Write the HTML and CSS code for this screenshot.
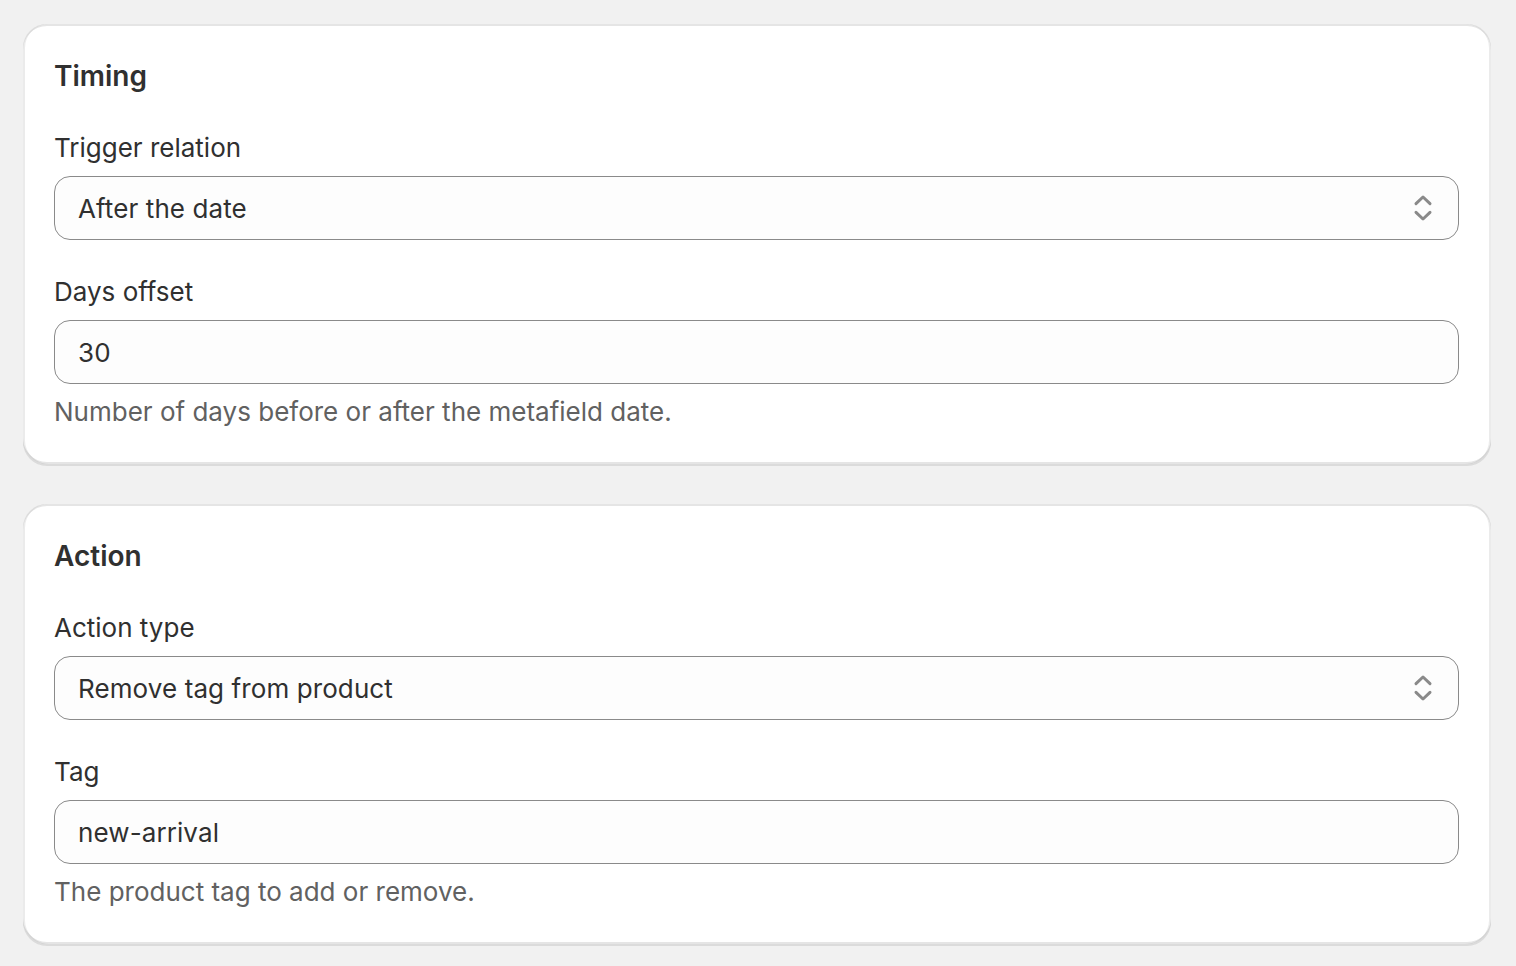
FILE: index.html
```html
<!DOCTYPE html>
<html lang="en">
<head>
  <meta charset="UTF-8">
  <meta name="viewport" content="width=device-width, initial-scale=1.0">
  <title>Automation settings</title>
  <link rel="stylesheet" href="styles.css">
</head>
<body>

  <div class="page">
    <!-- Timing card -->
    <section class="card">
      <h2 class="card-title">Timing</h2>

      <div class="field">
        <label class="field-label" for="triggerRelation">Trigger relation</label>
        <div class="select">
          <select id="triggerRelation">
            <option>Before the date</option>
            <option selected>After the date</option>
          </select>
          <svg class="select-icon" viewBox="0 0 20 20" aria-hidden="true">
            <path d="M6.5 7.8 10 4.5l3.5 3.3M6.5 12.2 10 15.5l3.5-3.3"/>
          </svg>
        </div>
      </div>

      <div class="field">
        <label class="field-label" for="daysOffset">Days offset</label>
        <input class="text-input" type="number" id="daysOffset" value="30">
        <p class="help-text">Number of days before or after the metafield date.</p>
      </div>
    </section>

    <!-- Action card -->
    <section class="card">
      <h2 class="card-title">Action</h2>

      <div class="field">
        <label class="field-label" for="actionType">Action type</label>
        <div class="select">
          <select id="actionType">
            <option>Add tag to product</option>
            <option selected>Remove tag from product</option>
          </select>
          <svg class="select-icon" viewBox="0 0 20 20" aria-hidden="true">
            <path d="M6.5 7.8 10 4.5l3.5 3.3M6.5 12.2 10 15.5l3.5-3.3"/>
          </svg>
        </div>
      </div>

      <div class="field">
        <label class="field-label" for="tag">Tag</label>
        <input class="text-input" type="text" id="tag" value="new-arrival">
        <p class="help-text">The product tag to add or remove.</p>
      </div>
    </section>
  </div>

</body>
</html>
```

FILE: styles.css
```css
body {
  margin: 0;
  background-color: #f1f1f1;
  font-family: Inter, "Noto Sans", sans-serif;
  color: #303030;
}
.page {
  padding: 24px 25px 24px 23px;
  display: flex;
  flex-direction: column;
  gap: 40px;
}
.card {
  background-color: #fff;
  border-radius: 24px;
  padding: 32px 32px 32px 31px;
  display: flex;
  flex-direction: column;
  gap: 32px;
  box-shadow: 0 2px 0 0 rgba(26, 26, 26, 0.1),
              inset 0 2px 0 0 rgba(204, 204, 204, 0.5),
              inset 2px 0 0 0 rgba(0, 0, 0, 0.08),
              inset -2px 0 0 0 rgba(0, 0, 0, 0.08),
              inset 0 -2px 0 0 rgba(0, 0, 0, 0.1);
}
.card-title {
  margin: 0;
  font-size: 28px;
  line-height: 40px;
  font-weight: 600;
}
.field {
  display: flex;
  flex-direction: column;
}
.field-label {
  font-size: 26px;
  line-height: 40px;
  font-weight: 400;
  margin-bottom: 8px;
}
.select {
  position: relative;
}
.select select,
.text-input {
  box-sizing: border-box;
  width: 100%;
  height: 64px;
  margin: 0;
  padding: 0 23px;
  border: 1.5px solid #8a8a8a;
  border-radius: 16px;
  background-color: #fdfdfd;
  font-family: inherit;
  font-size: 26px;
  font-weight: 400;
  letter-spacing: 0.1px;
  color: #303030;
  appearance: none;
  -moz-appearance: textfield;
  outline: none;
}
.text-input::-webkit-inner-spin-button,
.text-input::-webkit-outer-spin-button {
  -webkit-appearance: none;
  margin: 0;
}
.select-icon {
  position: absolute;
  right: 16px;
  top: 12px;
  width: 40px;
  height: 40px;
  pointer-events: none;
  fill: none;
  stroke: #8a8a8a;
  stroke-width: 1.5;
  stroke-linecap: round;
  stroke-linejoin: round;
}
.help-text {
  margin: 8px 0 0;
  font-size: 26px;
  line-height: 40px;
  color: #616161;
}
```
